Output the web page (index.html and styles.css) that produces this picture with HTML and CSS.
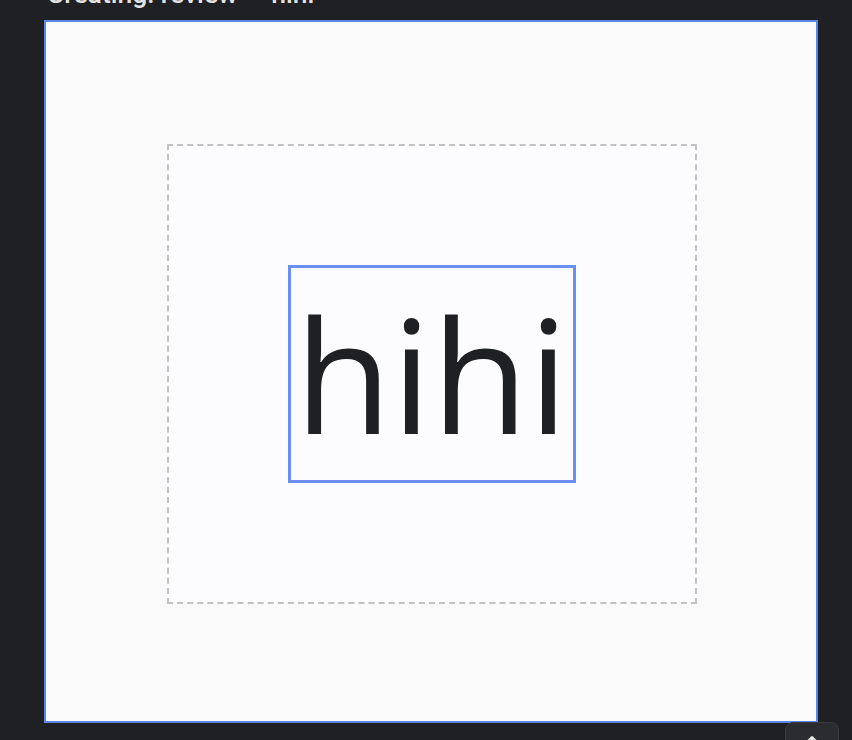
FILE: index.html
```html
<!DOCTYPE html>
<html lang="en">
<head>
  <meta charset="UTF-8" />
  <meta name="viewport" content="width=device-width, initial-scale=1.0"/>
  <title>Creating: review — hihi</title>
  <link rel="stylesheet" href="styles.css">
</head>
<body>
  <div class="page">
    <h1 class="page-title">Creating: review — hihi</h1>

    <div class="preview">
      <div class="canvas">
        <div class="selection">hihi</div>
      </div>
    </div>
  </div>

  <button class="fab" type="button" aria-label="Edit">
    <svg width="16" height="16" viewBox="0 0 16 16">
      <path d="M8 2v12M3 7l5-5 5 5" fill="none" stroke="#e8e8e8" stroke-width="2" stroke-linecap="round" stroke-linejoin="round"/>
    </svg>
  </button>
</body>
</html>
```

FILE: styles.css
```css
:root {
  --fundo: #1f2023;
  --azul: #5b86e5;
  --azul-claro: #6b8ff0;
  --texto: #1f2023;
}

html, body {
  height: 100%;
  overflow: hidden;
}

body {
  margin: 0;
  background: var(--fundo);
  font-family: Roboto, "Noto Sans", sans-serif;
  color: #e3e3e3;
}

.page {
  padding: 0 34px 0 44px;
}

.page-title {
  margin: -22px 0 10px 3px;
  font-size: 26.5px;
  line-height: 32px;
  font-weight: 500;
  color: #e3e3e3;
}

.preview {
  width: 774px;
  height: 703px;
  box-sizing: border-box;
  border: 2px solid var(--azul);
  background: #fafafa;
  display: flex;
  justify-content: center;
  align-items: center;
}

.canvas {
  width: 530px;
  height: 460px;
  box-sizing: border-box;
  border: 2px dashed #c2c2c2;
  background: #fcfcfe;
  display: flex;
  justify-content: center;
  align-items: center;
  margin: 4px 0 0 1px;
}

.selection {
  width: 288px;
  height: 218px;
  box-sizing: border-box;
  border: 3px solid var(--azul-claro);
  font-family: "Open Sans", "Noto Sans", sans-serif;
  font-size: 158px;
  font-weight: 500;
  line-height: 210px;
  text-align: center;
  color: var(--texto);
}

.fab {
  position: fixed;
  left: 785px;
  top: 722px;
  width: 54px;
  height: 40px;
  border-radius: 8px;
  border: 1px solid #3a3b3e;
  background: #2b2c2f;
  padding: 12px 0 0;
  display: flex;
  justify-content: center;
  align-items: flex-start;
  cursor: pointer;
}
```
